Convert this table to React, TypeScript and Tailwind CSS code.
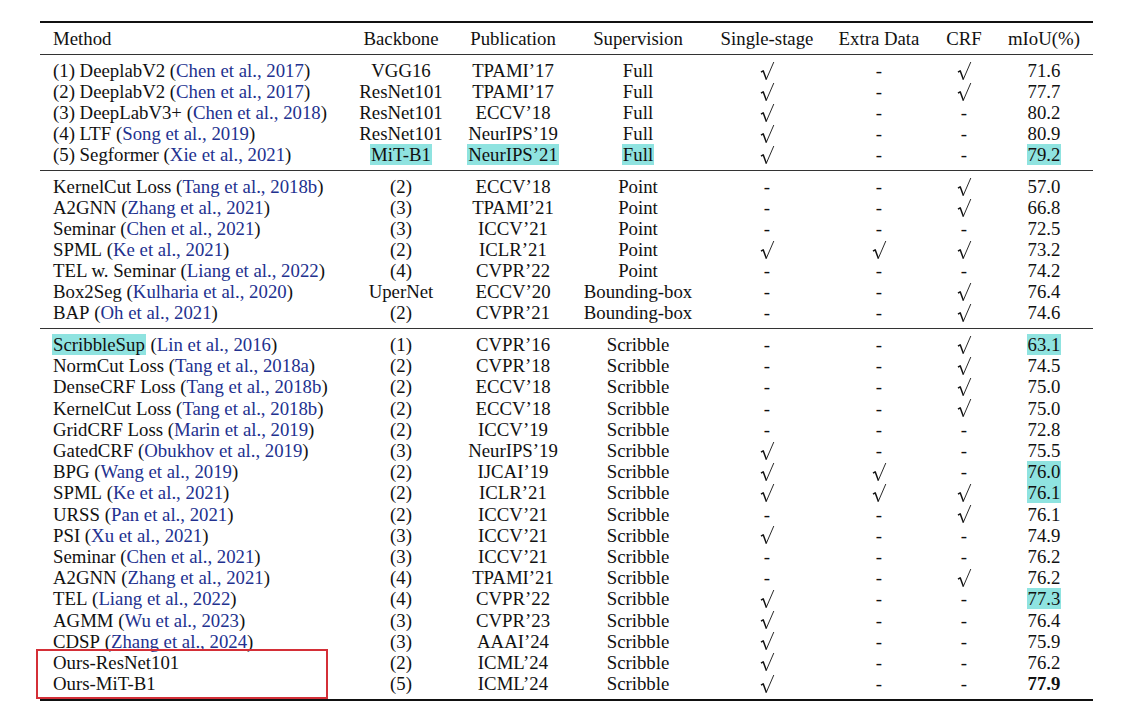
import React from "react";

type Cell = string | { t: string; hl?: boolean; b?: boolean };
type Row = {
  name: string;
  cite?: string;
  nameHl?: boolean;
  cells: Cell[];
};

const C = "✓";

const sec1: Row[] = [
  { name: "(1) DeeplabV2", cite: "Chen et al., 2017", cells: ["VGG16", "TPAMI’17", "Full", C, "-", C, "71.6"] },
  { name: "(2) DeeplabV2", cite: "Chen et al., 2017", cells: ["ResNet101", "TPAMI’17", "Full", C, "-", C, "77.7"] },
  { name: "(3) DeepLabV3+", cite: "Chen et al., 2018", cells: ["ResNet101", "ECCV’18", "Full", C, "-", "-", "80.2"] },
  { name: "(4) LTF", cite: "Song et al., 2019", cells: ["ResNet101", "NeurIPS’19", "Full", C, "-", "-", "80.9"] },
  {
    name: "(5) Segformer",
    cite: "Xie et al., 2021",
    cells: [{ t: "MiT-B1", hl: true }, { t: "NeurIPS’21", hl: true }, { t: "Full", hl: true }, C, "-", "-", { t: "79.2", hl: true }],
  },
];

const sec2: Row[] = [
  { name: "KernelCut Loss", cite: "Tang et al., 2018b", cells: ["(2)", "ECCV’18", "Point", "-", "-", C, "57.0"] },
  { name: "A2GNN", cite: "Zhang et al., 2021", cells: ["(3)", "TPAMI’21", "Point", "-", "-", C, "66.8"] },
  { name: "Seminar", cite: "Chen et al., 2021", cells: ["(3)", "ICCV’21", "Point", "-", "-", "-", "72.5"] },
  { name: "SPML", cite: "Ke et al., 2021", cells: ["(2)", "ICLR’21", "Point", C, C, C, "73.2"] },
  { name: "TEL w. Seminar", cite: "Liang et al., 2022", cells: ["(4)", "CVPR’22", "Point", "-", "-", "-", "74.2"] },
  { name: "Box2Seg", cite: "Kulharia et al., 2020", cells: ["UperNet", "ECCV’20", "Bounding-box", "-", "-", C, "76.4"] },
  { name: "BAP", cite: "Oh et al., 2021", cells: ["(2)", "CVPR’21", "Bounding-box", "-", "-", C, "74.6"] },
];

const sec3: Row[] = [
  { name: "ScribbleSup", nameHl: true, cite: "Lin et al., 2016", cells: ["(1)", "CVPR’16", "Scribble", "-", "-", C, { t: "63.1", hl: true }] },
  { name: "NormCut Loss", cite: "Tang et al., 2018a", cells: ["(2)", "CVPR’18", "Scribble", "-", "-", C, "74.5"] },
  { name: "DenseCRF Loss", cite: "Tang et al., 2018b", cells: ["(2)", "ECCV’18", "Scribble", "-", "-", C, "75.0"] },
  { name: "KernelCut Loss", cite: "Tang et al., 2018b", cells: ["(2)", "ECCV’18", "Scribble", "-", "-", C, "75.0"] },
  { name: "GridCRF Loss", cite: "Marin et al., 2019", cells: ["(2)", "ICCV’19", "Scribble", "-", "-", "-", "72.8"] },
  { name: "GatedCRF", cite: "Obukhov et al., 2019", cells: ["(3)", "NeurIPS’19", "Scribble", C, "-", "-", "75.5"] },
  { name: "BPG", cite: "Wang et al., 2019", cells: ["(2)", "IJCAI’19", "Scribble", C, C, "-", { t: "76.0", hl: true }] },
  { name: "SPML", cite: "Ke et al., 2021", cells: ["(2)", "ICLR’21", "Scribble", C, C, C, { t: "76.1", hl: true }] },
  { name: "URSS", cite: "Pan et al., 2021", cells: ["(2)", "ICCV’21", "Scribble", "-", "-", C, "76.1"] },
  { name: "PSI", cite: "Xu et al., 2021", cells: ["(3)", "ICCV’21", "Scribble", C, "-", "-", "74.9"] },
  { name: "Seminar", cite: "Chen et al., 2021", cells: ["(3)", "ICCV’21", "Scribble", "-", "-", "-", "76.2"] },
  { name: "A2GNN", cite: "Zhang et al., 2021", cells: ["(4)", "TPAMI’21", "Scribble", "-", "-", C, "76.2"] },
  { name: "TEL", cite: "Liang et al., 2022", cells: ["(4)", "CVPR’22", "Scribble", C, "-", "-", { t: "77.3", hl: true }] },
  { name: "AGMM", cite: "Wu et al., 2023", cells: ["(3)", "CVPR’23", "Scribble", C, "-", "-", "76.4"] },
  { name: "CDSP", cite: "Zhang et al., 2024", cells: ["(3)", "AAAI’24", "Scribble", C, "-", "-", "75.9"] },
  { name: "Ours-ResNet101", cells: ["(2)", "ICML’24", "Scribble", C, "-", "-", "76.2"] },
  { name: "Ours-MiT-B1", cells: ["(5)", "ICML’24", "Scribble", C, "-", "-", { t: "77.9", b: true }] },
];

const GRID = "grid grid-cols-[310px_102px_122px_128px_130px_94px_76px_84px_7px]";

function Check() {
  return (
    <svg width="15" height="20" viewBox="0 0 15 20" className="block">
      <path d="M1 11.2 L3.2 9.8 L6.4 18.6" fill="none" stroke="#111" strokeWidth="1.5" strokeLinejoin="round" />
      <path d="M6.2 18.6 L13.8 1" fill="none" stroke="#111" strokeWidth="0.9" />
    </svg>
  );
}

function Value({ c }: { c: Cell }) {
  if (c === C) return <Check />;
  if (typeof c === "string") return <span>{c}</span>;
  if (c.hl)
    return <span className="inline-block h-[21px] leading-[21px] bg-[#8fe3e0] px-[1px]">{c.t}</span>;
  if (c.b) return <span className="font-bold">{c.t}</span>;
  return <span>{c.t}</span>;
}

function TableRow({ r, h }: { r: Row; h: string }) {
  return (
    <div className={`${GRID} ${h} items-center`}>
      <div className="pl-[13px] whitespace-nowrap flex items-center">
        {r.nameHl ? (
          <span className="inline-block h-[21px] leading-[21px] bg-[#8fe3e0] px-[1px] -ml-[1px]">{r.name}</span>
        ) : (
          <span>{r.name}</span>
        )}
        {r.cite && (
          <span className="whitespace-pre">
            {" ("}
            <span className="text-[#22318f]">{r.cite}</span>
            {")"}
          </span>
        )}
      </div>
      {r.cells.map((c, i) => (
        <div key={i} className="flex justify-center items-center whitespace-nowrap">
          <Value c={c} />
        </div>
      ))}
      <div />
    </div>
  );
}

export default function App() {
  return (
    <div className="w-[1142px] h-[713px] bg-white text-[#111] font-['Liberation_Serif','Times_New_Roman',serif] text-[18.8px] leading-[21px] overflow-hidden">
      <div className="pt-[21px] pl-[40px]">
        <div className="relative w-[1053px]">
          <div className="h-[2px] bg-[#111]" />
          <div className={`${GRID} h-[31px] items-center`}>
            <div className="pl-[13px]">Method</div>
            <div className="flex justify-center whitespace-nowrap">Backbone</div>
            <div className="flex justify-center whitespace-nowrap">Publication</div>
            <div className="flex justify-center whitespace-nowrap">Supervision</div>
            <div className="flex justify-center whitespace-nowrap">Single-stage</div>
            <div className="flex justify-center whitespace-nowrap">Extra Data</div>
            <div className="flex justify-center whitespace-nowrap">CRF</div>
            <div className="flex justify-center whitespace-nowrap">mIoU(%)</div>
            <div />
          </div>
          <div className="h-[1px] bg-[#333]" />
          <div className="pt-[5px] pb-[5px]">
            {sec1.map((r, i) => (
              <TableRow key={i} r={r} h="h-[21px]" />
            ))}
          </div>
          <div className="h-[1px] bg-[#333]" />
          <div className="pt-[5px] pb-[5px]">
            {sec2.map((r, i) => (
              <TableRow key={i} r={r} h="h-[21px]" />
            ))}
          </div>
          <div className="h-[1px] bg-[#333]" />
          <div className="pt-[5px] pb-[5px]">
            {sec3.map((r, i) => (
              <TableRow key={i} r={r} h="h-[21.2px]" />
            ))}
          </div>
          <div className="h-[2px] bg-[#111]" />
          <div className="absolute left-[-4px] top-[628px] w-[292px] h-[50px] border-2 border-[#d42f37] pointer-events-none" />
        </div>
      </div>
    </div>
  );
}
